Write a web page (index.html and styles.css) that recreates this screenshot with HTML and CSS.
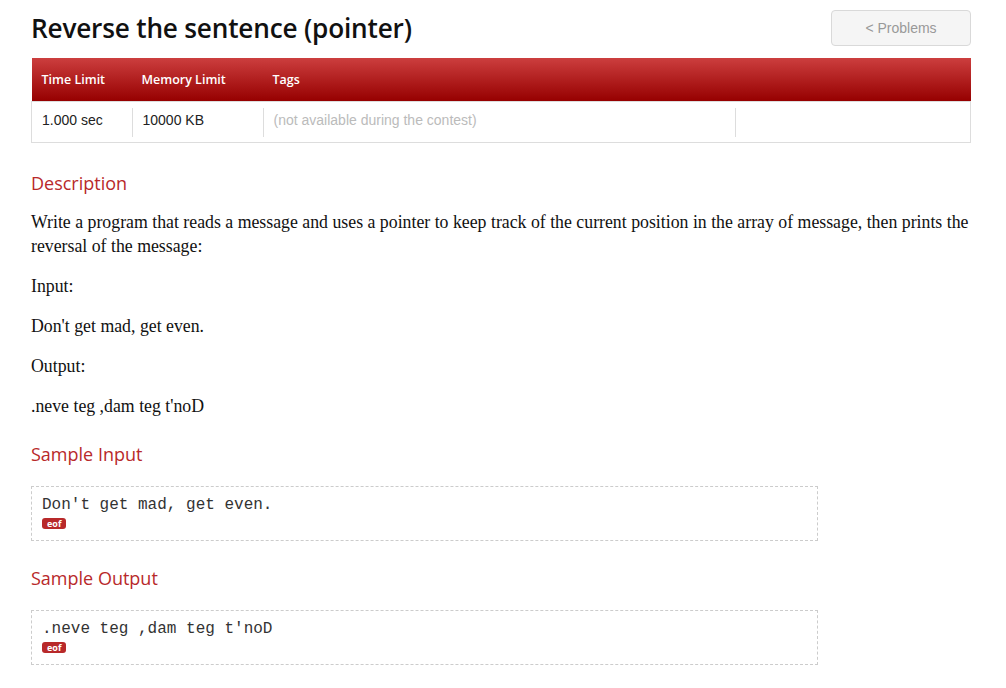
FILE: index.html
```html
<!DOCTYPE html>
<html>
<head>
<meta charset="utf-8">
<link rel="stylesheet" href="styles.css">
</head>
<body>
<div class="page">
  <div class="titlebar">
    <h1 class="title">Reverse the sentence (pointer)</h1>
    <a class="btn">&lt; Problems</a>
  </div>
  <table class="limits">
    <thead>
      <tr><th class="c1">Time Limit</th><th class="c2">Memory Limit</th><th class="c3">Tags</th><th class="c4"></th></tr>
    </thead>
    <tbody>
      <tr>
        <td class="c1"><span class="cell">1.000 sec</span></td>
        <td class="c2"><span class="cell sep">10000 KB</span></td>
        <td class="c3"><span class="cell sep muted">(not available during the contest)</span></td>
        <td class="c4"><span class="cell sep">&nbsp;</span></td>
      </tr>
    </tbody>
  </table>

  <h2 class="heading first">Description</h2>
  <div class="desc">
    <p>Write a program that reads a message and uses a pointer to keep track of the current position in the array of message, then prints the reversal of the message:</p>
    <p>Input:</p>
    <p>Don't get mad, get even.</p>
    <p>Output:</p>
    <p>.neve teg ,dam teg t'noD</p>
  </div>

  <h2 class="heading after-desc">Sample Input</h2>
  <div class="sample"><pre>Don't get mad, get even.</pre><span class="eof">eof</span></div>

  <h2 class="heading">Sample Output</h2>
  <div class="sample"><pre>.neve teg ,dam teg t'noD</pre><span class="eof">eof</span></div>
</div>
</body>
</html>
```

FILE: styles.css
```css
html, body { margin: 0; padding: 0; background: #fff; }
body { font-family: "Liberation Sans", Arial, sans-serif; color: #222; }
.page { width: 940px; margin: 0 0 0 31px; padding-top: 10px; }
.titlebar { display: flex; justify-content: space-between; align-items: flex-start; height: 48px; }
.title { margin: 0; font-family: "Open Sans", "Noto Sans", sans-serif; font-weight: 600; font-size: 26.2px; line-height: 36px; color: #111; letter-spacing: -0.2px; }
.btn { display: block; box-sizing: border-box; width: 140px; height: 36px; line-height: 34px; text-align: center; border: 1px solid #d9d9d9; border-radius: 4px; background: #f5f5f5; color: #999; font-size: 14px; }
.limits { width: 940px; border-collapse: collapse; table-layout: fixed; }
.limits th { height: 43px; padding: 0 0 0 10px; text-align: left; color: #fff; font-family: "Open Sans", "Noto Sans", sans-serif; font-weight: 600; font-size: 12.5px; background: linear-gradient(#cc3e3e, #960000); }
.limits th.c1 { width: 90px; }
.limits th.c2 { width: 121px; }
.limits th.c3 { width: 462px; }
.limits td { padding: 6px 0 5px; height: 29px; border-top: 1px solid #ddd; border-bottom: 1px solid #ddd; font-size: 14px; color: #222; }
.limits td.c1 { border-left: 1px solid #ddd; }
.limits td.c4 { border-right: 1px solid #ddd; }
.cell { display: block; height: 29px; line-height: 25px; padding-left: 10px; }
.cell.sep { border-left: 1px solid #ddd; }
.muted { color: #bbb; }
.heading { margin: 0; font-family: "Open Sans", "Noto Sans", sans-serif; font-weight: 400; font-size: 18px; color: #b8292a; line-height: 24px; padding: 25px 0 0; }
.heading.first { padding-top: 28px; }
.heading.after-desc { padding-top: 24px; }
.desc { font-family: "Liberation Serif", "Times New Roman", serif; font-size: 17.8px; color: #111; line-height: 24px; padding-top: 15px; }
.desc p { margin: 0 0 16px; }
.desc p:last-child { margin-bottom: 0; }
.sample { width: 787px; box-sizing: border-box; margin-top: 20px; border: 1px dashed #ccc; padding: 9px 10px 8px; }
.sample pre { margin: 0; font-family: "Liberation Mono", "Courier New", monospace; font-size: 16px; line-height: 18px; color: #333; }
.eof { display: inline-block; margin-top: 4px; background: #b8292a; color: #fff; font-family: "Open Sans", sans-serif; font-weight: 700; font-size: 9px; line-height: 11px; padding: 0 5px; border-radius: 3px; vertical-align: top; }
```
